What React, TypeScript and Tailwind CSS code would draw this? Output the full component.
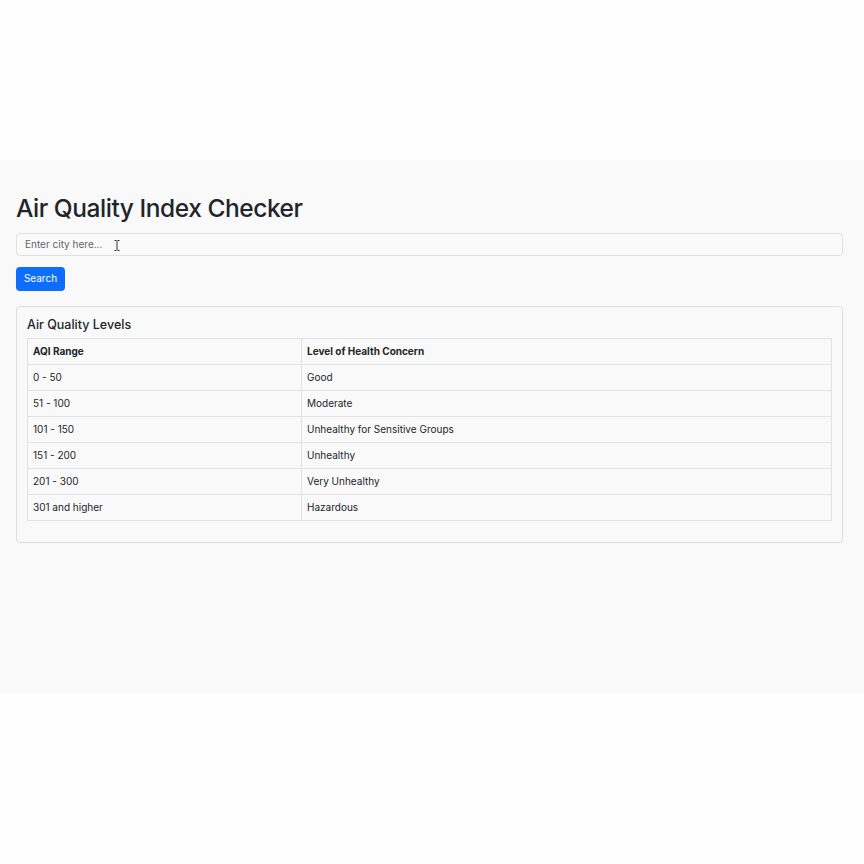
import React from "react";

const levels = [
  { range: "0 - 50", concern: "Good" },
  { range: "51 - 100", concern: "Moderate" },
  { range: "101 - 150", concern: "Unhealthy for Sensitive Groups" },
  { range: "151 - 200", concern: "Unhealthy" },
  { range: "201 - 300", concern: "Very Unhealthy" },
  { range: "301 and higher", concern: "Hazardous" },
];

function TextCursor() {
  return (
    <svg
      className="absolute left-[98px] top-[10px]"
      width="6"
      height="11"
      viewBox="0 0 6 11"
      fill="none"
      stroke="#333"
      strokeWidth="1"
    >
      <path d="M0.5 0.5 H2.5 M3.5 0.5 H5.5 M3 1 V10 M0.5 10.5 H2.5 M3.5 10.5 H5.5" />
    </svg>
  );
}

export default function App() {
  return (
    <div className="h-[864px] overflow-hidden bg-[#fefefe] pt-[160px] font-['Inter',sans-serif] text-[#212529]">
      <div className="h-[534px] bg-[#f9f9f9] pl-4 pr-[21px] pt-[33px]">
        <h1 className="text-[24.5px] leading-[30px] font-medium tracking-[-0.45px]">
          Air Quality Index Checker
        </h1>

        <div className="relative mt-[7px]">
          <input
            type="text"
            placeholder="Enter city here..."
            className="h-[23px] w-full rounded-[4px] border border-[#e0e0e0] bg-[#fafafa] px-[8px] text-[10px] placeholder:text-[#5f646a] outline-none"
          />
          <TextCursor />
        </div>

        <button className="mt-[11px] h-[24px] w-[49px] rounded-[4px] bg-[#0d6efd] text-[10px] text-white">
          Search
        </button>

        <div className="mt-[15px] rounded-[4px] border border-[#dedede] px-[10px] pt-[10px] pb-[21px]">
          <h5 className="text-[12.5px] leading-[16px] font-medium">
            Air Quality Levels
          </h5>
          <table className="mt-[5px] w-full border-collapse text-[10px]">
            <thead>
              <tr className="h-[26px]">
                <th className="w-[274px] border border-[#e2e2e2] px-[5px] text-left font-bold">
                  AQI Range
                </th>
                <th className="border border-[#e2e2e2] px-[5px] text-left font-bold">
                  Level of Health Concern
                </th>
              </tr>
            </thead>
            <tbody>
              {levels.map((l) => (
                <tr key={l.range} className="h-[26px]">
                  <td className="border border-[#e2e2e2] px-[5px]">{l.range}</td>
                  <td className="border border-[#e2e2e2] px-[5px]">{l.concern}</td>
                </tr>
              ))}
            </tbody>
          </table>
        </div>
      </div>
    </div>
  );
}
